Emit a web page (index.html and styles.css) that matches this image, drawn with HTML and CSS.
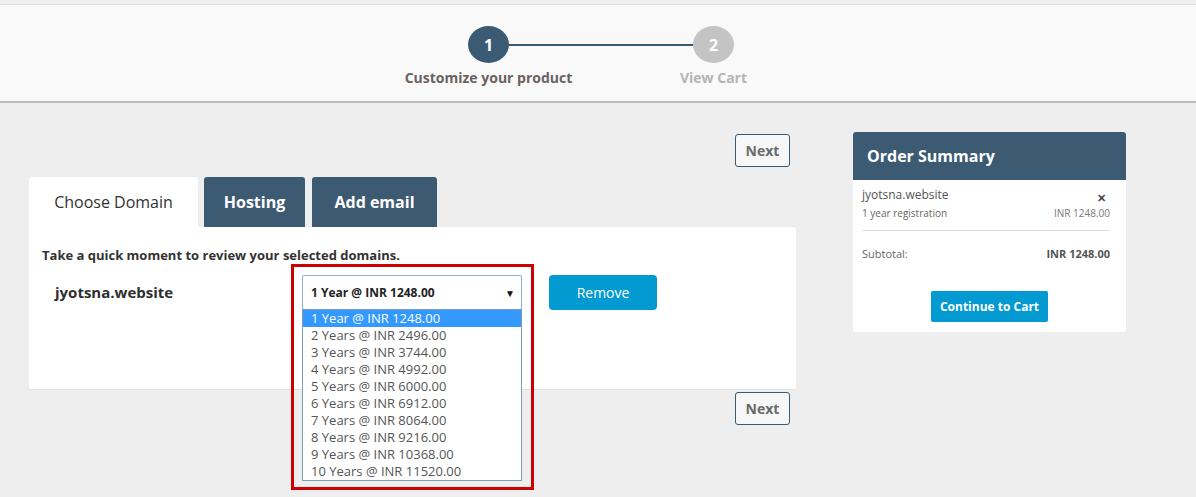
FILE: index.html
```html
<!DOCTYPE html>
<html>
<head>
<meta charset="utf-8">
<link rel="stylesheet" href="styles.css">
</head>
<body>
<div class="topstrip"></div>
<header class="header">
  <div class="steps">
    <div class="step">
      <div class="circle active">1</div>
      <div class="label active-label">Customize your product</div>
    </div>
    <div class="connector"></div>
    <div class="step">
      <div class="circle">2</div>
      <div class="label">View Cart</div>
    </div>
  </div>
</header>
<main class="main">
  <section class="left">
    <div class="next-row"><button class="next">Next</button></div>
    <div class="tabs">
      <div class="tab tab-active">Choose Domain</div>
      <div class="tab">Hosting</div>
      <div class="tab">Add email</div>
    </div>
    <div class="panel">
      <p class="intro">Take a quick moment to review your selected domains.</p>
      <div class="domain-row">
        <div class="domain">jyotsna.website</div>
        <div class="select-wrap">
          <div class="select"><span>1 Year @ INR 1248.00</span><span class="arrow">▼</span></div>
          <ul class="options">
            <li class="sel">1 Year @ INR 1248.00</li>
            <li>2 Years @ INR 2496.00</li>
            <li>3 Years @ INR 3744.00</li>
            <li>4 Years @ INR 4992.00</li>
            <li>5 Years @ INR 6000.00</li>
            <li>6 Years @ INR 6912.00</li>
            <li>7 Years @ INR 8064.00</li>
            <li>8 Years @ INR 9216.00</li>
            <li>9 Years @ INR 10368.00</li>
            <li>10 Years @ INR 11520.00</li>
          </ul>
          <div class="highlight"></div>
        </div>
        <button class="remove">Remove</button>
      </div>
    </div>
    <div class="next-row bottom"><button class="next">Next</button></div>
  </section>
  <aside class="summary">
    <div class="summary-head">Order Summary</div>
    <div class="summary-body">
      <div class="item">
        <div class="item-left">
          <div class="item-name">jyotsna.website</div>
          <div class="item-sub">1 year registration</div>
        </div>
        <div class="item-right">
          <div class="close">✕</div>
          <div class="item-price">INR 1248.00</div>
        </div>
      </div>
      <div class="subtotal">
        <span>Subtotal:</span>
        <span class="sub-price">INR 1248.00</span>
      </div>
      <div class="cta-row"><button class="cta">Continue to Cart</button></div>
    </div>
  </aside>
</main>
</body>
</html>
```

FILE: styles.css
```css
* { box-sizing: border-box; }
html, body { min-height: 497px; }
body {
  margin: 0;
  background: #eeeeee;
  font-family: "Open Sans", "Liberation Sans", sans-serif;
  color: #333;
}
.topstrip {
  height: 5px;
  background: #eeeeee;
  border-bottom: 1px solid #dddddd;
}
.header {
  height: 98px;
  background: #f9f9f9;
  border-bottom: 2px solid #bbbbbb;
  display: flex;
  justify-content: center;
  padding-left: 6px;
}
.steps {
  display: flex;
  align-items: flex-start;
  padding-top: 21px;
}
.step {
  display: flex;
  flex-direction: column;
  align-items: center;
  width: 40px;
}
.circle {
  width: 41px;
  height: 37px;
  border-radius: 50%;
  background: #c4c4c4;
  color: #fff;
  font-weight: 700;
  font-size: 16px;
  display: flex;
  align-items: center;
  justify-content: center;
  flex: none;
}
.circle.active { background: #3b5a74; }
.label {
  white-space: nowrap;
  font-size: 14px;
  font-weight: 700;
  color: #b4b4b4;
  margin-top: 5px;
}
.active-label { color: #6b6260; }
.connector {
  width: 185px;
  height: 2px;
  background: #3b5a74;
  margin-top: 18px;
}
.main {
  display: flex;
  gap: 57px;
  padding: 31px 0 0 29px;
  align-items: flex-start;
  min-height: 391px;
}
.left { width: 767px; }
.next-row {
  display: flex;
  justify-content: flex-end;
  padding-right: 6px;
}
.next-row.bottom { margin-top: 2px; }
.next {
  width: 55px;
  height: 33px;
  border: 1px solid #3b5a74;
  border-radius: 3px;
  background: #f6f6f6;
  color: #6a6a6a;
  font-family: inherit;
  font-weight: 700;
  font-size: 14px;
  padding: 0;
}
.tabs {
  display: flex;
  gap: 6px;
  margin-top: 10px;
}
.tab {
  height: 50px;
  border-radius: 3px 3px 0 0;
  background: #3d5a73;
  color: #fff;
  font-weight: 700;
  font-size: 16px;
  display: flex;
  align-items: center;
  justify-content: center;
}
.tab-active {
  background: #fff;
  color: #333;
  font-weight: 400;
  width: 169px;
}
.tabs .tab:nth-child(2) { width: 101px; }
.tabs .tab:nth-child(3) { width: 125px; margin-left: 1px; }
.panel {
  background: #fff;
  height: 163px;
  border-radius: 0 3px 3px 3px;
  padding: 20px 13px;
  border-bottom: 1px solid #e2e2e2;
}
.intro {
  margin: 0;
  font-size: 13px;
  font-weight: 700;
  color: #333;
  line-height: 16px;
}
.domain-row {
  display: flex;
  align-items: flex-start;
  margin-top: 12px;
}
.domain {
  width: 260px;
  flex: none;
  padding: 7px 0 0 13px;
  font-size: 15px;
  font-weight: 700;
  color: #2e2e2e;
}
.select-wrap {
  position: relative;
  width: 220px;
  flex: none;
}
.select {
  height: 35px;
  border: 1px solid #8fb0dd;
  border-radius: 2px;
  background: #fff;
  display: flex;
  align-items: center;
  justify-content: space-between;
  padding: 0 6px 0 8px;
  font-size: 12px;
  font-weight: 700;
  color: #222;
}
.arrow { font-size: 10px; color: #111; }
.options {
  position: absolute;
  top: 34px;
  left: 0;
  width: 220px;
  margin: 0;
  padding: 0;
  list-style: none;
  background: #fff;
  border: 1px solid #7f9db9;
  z-index: 2;
}
.options li {
  height: 17px;
  line-height: 17px;
  padding-left: 8px;
  font-size: 13px;
  color: #555;
}
.options li.sel { background: #3399ff; color: #fff; }
.highlight {
  position: absolute;
  left: -11px;
  top: -11px;
  width: 243px;
  height: 226px;
  border: 3px solid #cc0000;
  z-index: 3;
  pointer-events: none;
}
.remove {
  margin-left: 27px;
  width: 108px;
  height: 35px;
  border: none;
  border-radius: 4px;
  background: #0399d1;
  color: #fff;
  font-family: inherit;
  font-size: 14px;
}
.summary {
  width: 273px;
  margin-top: -2px;
  background: #fff;
  border-radius: 3px;
  overflow: hidden;
}
.summary-head {
  height: 48px;
  background: #3d5a73;
  color: #fff;
  font-weight: 700;
  font-size: 16px;
  display: flex;
  align-items: center;
  padding-left: 14px;
}
.summary-body { padding: 7px 16px 10px 9px; }
.item {
  display: flex;
  justify-content: space-between;
  padding-bottom: 10px;
  border-bottom: 1px solid #dddddd;
}
.item-name { font-size: 12px; color: #555; line-height: 16px; }
.item-sub { font-size: 10px; color: #666; margin-top: 3px; }
.item-right { display: flex; flex-direction: column; align-items: flex-end; }
.close { font-size: 11px; font-weight: 700; color: #444; margin-top: 5px; margin-right: 4px; line-height: 12px; }
.item-price { font-size: 10px; color: #777; margin-top: 2px; }
.subtotal {
  display: flex;
  justify-content: space-between;
  margin-top: 15px;
  font-size: 11px;
  color: #666;
}
.sub-price { font-weight: 700; color: #555; }
.cta-row { display: flex; justify-content: center; margin-top: 30px; padding-left: 7px; }
.cta {
  width: 117px;
  height: 31px;
  border: none;
  border-radius: 2px;
  background: #0399d1;
  color: #fff;
  font-family: inherit;
  font-size: 12px;
  font-weight: 700;
  padding: 0;
}
```
